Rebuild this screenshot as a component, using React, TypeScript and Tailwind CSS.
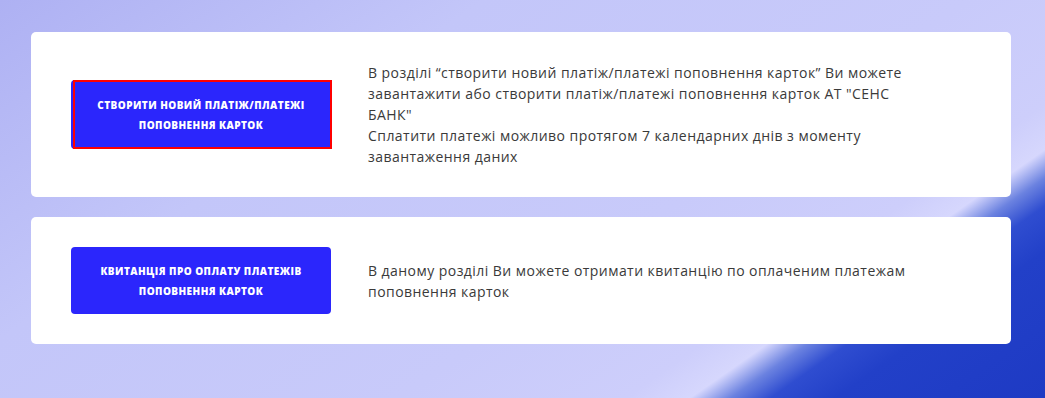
import React from "react";

const bodyFont = { fontFamily: '"Open Sans", "Noto Sans", sans-serif' };

function Btn({ lines, outlined }: { lines: string[]; outlined?: boolean }) {
  return (
    <div className="relative shrink-0">
      <div
        className={`flex w-[260px] flex-col items-center justify-center rounded-[4px] bg-[#2b26fc] text-[10px] font-extrabold uppercase leading-[20px] tracking-[0.45px] text-white ${outlined ? "h-[69px]" : "h-[67px]"}`}
        style={bodyFont}
      >
        {lines.map((l) => (
          <span key={l}>{l}</span>
        ))}
      </div>
      {outlined && (
        <div className="absolute left-[2px] top-0 h-[69px] w-[259px] border-2 border-[#ff0000]" />
      )}
    </div>
  );
}

export default function App() {
  return (
    <div className="relative h-[398px] w-[1045px] overflow-hidden bg-[#c8cafa] bg-[linear-gradient(145deg,#aeb1f3_0%,#c3c6f9_30%,#c8cafa_60%,#cdcefb_74%,#d6d7fd_78%,#6b82e0_80.5%,#2f4dd0_83%,#2240c8_87%,#1e3ac4_100%)]">
      <div className="flex flex-col gap-[20px] pl-[31px] pt-[32px]">
        <div className="flex w-[980px] items-center rounded-[5px] bg-white py-[30px] pl-[40px]">
          <Btn lines={["Створити новий платіж/платежі", "поповнення карток"]} outlined />
          <div className="ml-[37px] text-[14px] leading-[21px] tracking-[0.45px] text-[#3a3a3a]" style={bodyFont}>
            <div className="whitespace-nowrap">В розділі “створити новий платіж/платежі поповнення карток” Ви можете</div>
            <div className="whitespace-nowrap">завантажити або створити платіж/платежі поповнення карток АТ "СЕНС</div>
            <div className="whitespace-nowrap">БАНК"</div>
            <div className="whitespace-nowrap">Сплатити платежі можливо протягом 7 календарних днів з моменту</div>
            <div className="whitespace-nowrap">завантаження даних</div>
          </div>
        </div>
        <div className="flex w-[980px] items-center rounded-[5px] bg-white py-[30px] pl-[40px]">
          <Btn lines={["Квитанція про оплату платежів", "поповнення карток"]} />
          <div className="ml-[37px] text-[14px] leading-[21px] tracking-[0.45px] text-[#3a3a3a]" style={bodyFont}>
            <div className="whitespace-nowrap">В даному розділі Ви можете отримати квитанцію по оплаченим платежам</div>
            <div className="whitespace-nowrap">поповнення карток</div>
          </div>
        </div>
      </div>
    </div>
  );
}
